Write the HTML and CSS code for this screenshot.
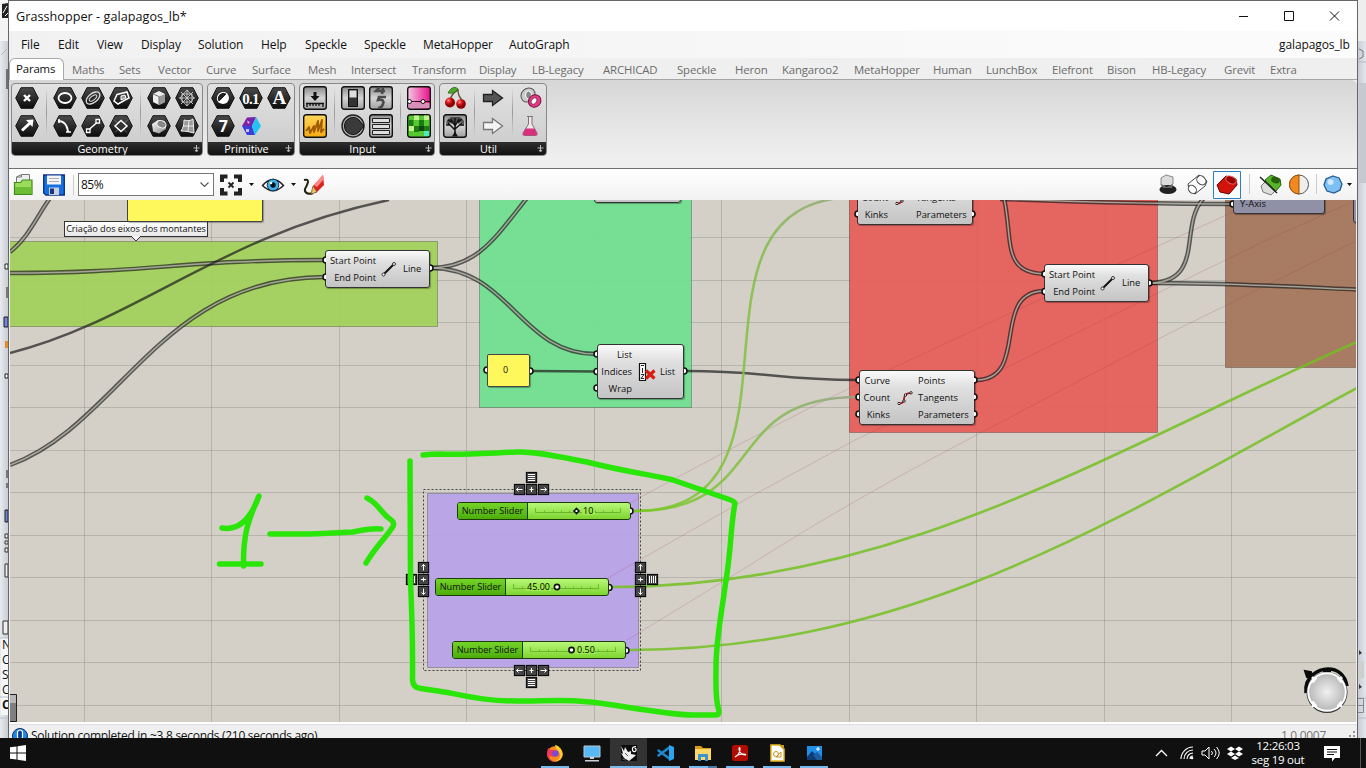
FILE: index.html
```html
<!DOCTYPE html>
<html lang="en">
<head>
<meta charset="utf-8">
<title>Grasshopper - galapagos_lb*</title>
<link rel="stylesheet" href="styles.css">
</head>
<body>
<svg class="defs" width="0" height="0">
  <defs>
    <linearGradient id="hexfill" x1="0" y1="0" x2="0" y2="1"><stop offset="0" stop-color="#4a4a4a"/><stop offset="1" stop-color="#0c0c0c"/></linearGradient>
    <linearGradient id="tile" x1="0" y1="0" x2="0" y2="1"><stop offset="0" stop-color="#8a8a8a"/><stop offset=".5" stop-color="#d4d4d4"/><stop offset="1" stop-color="#a0a0a0"/></linearGradient>
    <linearGradient id="solid" x1="0" y1="0" x2="1" y2="1"><stop offset="0" stop-color="#ffffff"/><stop offset="1" stop-color="#888"/></linearGradient>
    <linearGradient id="pink" x1="0" y1="0" x2="1" y2="0"><stop offset="0" stop-color="#f5c9e4"/><stop offset="1" stop-color="#e8108c"/></linearGradient>
    <linearGradient id="orange" x1="0" y1="0" x2="0" y2="1"><stop offset="0" stop-color="#ffd65c"/><stop offset="1" stop-color="#f7ab10"/></linearGradient>
    <radialGradient id="cherry" cx=".35" cy=".3"><stop offset="0" stop-color="#ff8888"/><stop offset=".5" stop-color="#d81818"/><stop offset="1" stop-color="#8c0000"/></radialGradient>
    <symbol id="hex" viewBox="0 0 24 22"><path d="M6 .7h12l5.300 10.300L18 21.300H6L.7 11z" fill="url(#hexfill)" stroke="#151515" stroke-width="1"/></symbol>
  </defs>
</svg>

<div class="desktop">
  <div class="behind-left">
    <svg width="8" height="738" viewBox="0 0 8 738">
      <path d="M0 0h8v41H0z" fill="#f4f4f4"/><path d="M2 4l6-1v15H2z" fill="#222"/><path d="M3 13l4-7M5 16l3-3" stroke="#fff"/>
      <path d="M1 55l6-6" stroke="#bbb"/><path d="M7 69v20" stroke="#111"/>
      <path d="M5 264h3v5H5zM5 374h3v4H5zM7 287v11M7 470v8M7 483v5" stroke="#222" fill="#fff"/>
      <path d="M4 317h4v10H4zM5 510h3v12H5z" fill="#7384d8" stroke="#222"/><path d="M5 341h3v7H5z" fill="#e38a2c"/>
      <path d="M5 534h3v4H5zM5 541h3v3H5zM5 548h3v4H5zM5 564h3v13H5zM3 621h5v13H3z" stroke="#333" fill="#eee"/>
      <path d="M1 638h7v77H1z" fill="#f5f6f8"/><path d="M0 638h8M0 697h8M0 718h8" stroke="#b8c2cf"/>
    </svg>
    <div class="sliver"><span>N</span><span>C</span><span>S</span><span>C</span><b>C</b></div>
  </div>

  <div class="window">
    <header class="titlebar">
      <span class="title">Grasshopper - galapagos_lb*</span>
      <svg class="winbtns" width="100" height="14" viewBox="0 0 100 14" fill="none" stroke="#111"><path d="M0 7.500h9M45.500 2.500h9v9h-9zM91 2.500l9 9M100 2.500l-9 9"/></svg>
    </header>
    <nav class="menu">
      <span>File</span><span>Edit</span><span>View</span><span>Display</span><span>Solution</span><span>Help</span><span>Speckle</span><span>Speckle</span><span>MetaHopper</span><span>AutoGraph</span><span class="doc">galapagos_lb</span>
    </nav>
    <nav class="tabs">
      <span class="active">Params</span><span>Maths</span><span>Sets</span><span>Vector</span><span>Curve</span><span>Surface</span><span>Mesh</span><span>Intersect</span><span>Transform</span><span>Display</span><span>LB-Legacy</span><span>ARCHICAD</span><span>Speckle</span><span>Heron</span><span>Kangaroo2</span><span>MetaHopper</span><span>Human</span><span>LunchBox</span><span>Elefront</span><span>Bison</span><span>HB-Legacy</span><span>Grevit</span><span>Extra</span>
    </nav>

    <section class="ribbon">
      <div class="panel">
        <div class="tools geometry">
          <svg class="ic" viewBox="0 0 24 22"><use href="#hex"/><path d="M9 8l6 6M15 8l-6 6" stroke="#fff" stroke-width="2.400"/></svg>
          <i class="rule"></i>
          <svg class="ic" viewBox="0 0 24 22"><use href="#hex"/><ellipse cx="12" cy="11" rx="6.500" ry="5" fill="none" stroke="#fff" stroke-width="1.800"/></svg>
          <svg class="ic" viewBox="0 0 24 22"><use href="#hex"/><g fill="none" stroke="#ddd" transform="rotate(-38 12 11)"><ellipse cx="12" cy="11" rx="8" ry="4.500" stroke-width="1.300"/><ellipse cx="12" cy="11" rx="4.500" ry="2"/></g></svg>
          <svg class="ic" viewBox="0 0 24 22"><use href="#hex"/><path d="M8 7.500L18 5l2 6-11 6-4-3z" fill="none" stroke="#fff" stroke-width="1.500"/><path d="M12 9l4-1 1 3-5 2z" fill="#999" stroke="#fff"/></svg>
          <i class="rule"></i>
          <svg class="ic" viewBox="0 0 24 22"><use href="#hex"/><path d="M6 7l6-3 6 3v8l-6 3-6-3z" fill="#eee"/><path d="M12 9.500l6-2.500v8l-6 3z" fill="#999"/><path d="M6 7l6 2.500V18" fill="none" stroke="#777"/></svg>
          <svg class="ic" viewBox="0 0 24 22"><use href="#hex"/><path d="M12 3v16M4 11h16M6 5l12 12M18 5L6 17M7 7h10v8H7zM5 11l7-8 7 8-7 8z" fill="none" stroke="#ccc" stroke-width=".9"/></svg>
          <svg class="ic" viewBox="0 0 24 22"><use href="#hex"/><path d="M7 15.500L15 8" stroke="#fff" stroke-width="3"/><path d="M11 5l7.500-.5L17.500 12z" fill="#fff"/></svg>
          <svg class="ic" viewBox="0 0 24 22"><use href="#hex"/><path d="M5 6c6 0 9 3 10 11" fill="none" stroke="#fff" stroke-width="2"/><path d="M13 17h5M6 4v4" stroke="#fff" stroke-width="1.600"/></svg>
          <svg class="ic" viewBox="0 0 24 22"><use href="#hex"/><path d="M7 15.500l10-9" stroke="#fff" stroke-width="1.500"/><path d="M5.500 14h3.500v3.500H5.500zM15 4.500h3.500V8H15z" fill="#222" stroke="#fff" stroke-width="1.300"/></svg>
          <svg class="ic" viewBox="0 0 24 22"><use href="#hex"/><path d="M5 4.500l13 13M19 4.500l-13 13" stroke="#777" stroke-width=".8"/><path d="M12 5.500l6 5.500-6 5.500L6 11z" fill="#333" stroke="#fff" stroke-width="1.500"/></svg>
          <svg class="ic" viewBox="0 0 24 22"><use href="#hex"/><path d="M5 9l6-4 8 4v5l-7 4.500-6-2z" fill="url(#solid)"/><ellipse cx="14.500" cy="9" rx="4.800" ry="3.500" fill="#888" stroke="#fff" transform="rotate(25 14 9)"/></svg>
          <svg class="ic" viewBox="0 0 24 22"><use href="#hex"/><path d="M9 5c4 1 6 1 9-1l1 14c-4-1-8-2-13-2 2-3 3-6 3-11z" fill="#999" stroke="#eee"/><path d="M14 6l-1 10M8 11l11 0" stroke="#eee" fill="none"/></svg>
        </div>
        <footer><span>Geometry</span><svg width="7" height="7" viewBox="0 0 7 7"><path d="M3.500 0v6M.5 3h6M2 5l1.500 2L5 5" stroke="#bbb" fill="none"/></svg></footer>
      </div>

      <div class="panel">
        <div class="tools primitive">
          <svg class="ic" viewBox="0 0 24 22"><use href="#hex"/><circle cx="12" cy="11" r="6" fill="#fff"/><path d="M7.800 15.200A6 6 0 0 1 16.200 6.800z" fill="#222" stroke="#fff" stroke-width="1"/></svg>
          <svg class="ic" viewBox="0 0 24 22"><use href="#hex"/><text x="11.500" y="16.500" class="hx">0.1</text></svg>
          <svg class="ic" viewBox="0 0 24 22"><use href="#hex"/><text x="12" y="17" class="hx big">A</text></svg>
          <svg class="ic" viewBox="0 0 24 22"><use href="#hex"/><text x="12" y="16.500" class="hx seven">7</text></svg>
          <svg class="ic" viewBox="0 0 24 22"><path d="M3 11L8 2.500l9-.5-4 9z" fill="#7a22a8"/><path d="M3 11h10l3 9H8z" fill="#3a3fd8"/><path d="M13 11l4-9 5 9-6 9z" fill="#22c4f4"/><path d="M8 5.500l3 1.500-2 2zM7 14h3v3H7z" fill="#fff" opacity=".7"/></svg>
        </div>
        <footer><span>Primitive</span><svg width="7" height="7" viewBox="0 0 7 7"><path d="M3.500 0v6M.5 3h6M2 5l1.500 2L5 5" stroke="#bbb" fill="none"/></svg></footer>
      </div>

      <div class="panel">
        <div class="tools input">
          <svg class="ic" viewBox="0 0 24 24"><rect x=".7" y=".7" width="22.600" height="22.600" rx="2.500" fill="url(#tile)" stroke="#111" stroke-width="1.400"/><path d="M12 6v5" stroke="#111" stroke-width="3"/><path d="M7.500 10h9L12 15z" fill="#111"/><path d="M3 17.500h18M4 17v4M7 17v3M10 17v3M13 17v3M16 17v3M20 17v4" stroke="#111" stroke-width="1.300"/></svg>
          <i class="rule"></i>
          <svg class="ic" viewBox="0 0 24 24"><rect x=".7" y=".7" width="22.600" height="22.600" rx="2.500" fill="url(#tile)" stroke="#111" stroke-width="1.400"/><path d="M7.500 3.500h9v17h-9z" fill="#333" stroke="#111"/><path d="M8.500 4.500h7v7h-7z" fill="#ddd"/></svg>
          <svg class="ic" viewBox="0 0 24 24"><rect x=".7" y=".7" width="22.600" height="22.600" rx="2.500" fill="url(#tile)" stroke="#111" stroke-width="1.400"/><path d="M11 1L7 5h9M14 1l-1 7M17 11h-7l-1 3c5-1 6 1 5 4-1 3-2 4-5 4" fill="none" stroke="#4a4a4a" stroke-width="2.600"/></svg>
          <i class="rule"></i>
          <svg class="ic" viewBox="0 0 24 24"><rect x=".7" y=".7" width="22.600" height="22.600" rx="2.500" fill="url(#pink)" stroke="#111" stroke-width="1.400"/><path d="M1.500 17h21v5h-21z" fill="#d890b8"/><path d="M1 15.500h22" stroke="#311" stroke-width="1.200"/><circle cx="2.500" cy="15.500" r="2" fill="#fff" stroke="#111"/><circle cx="16" cy="15.500" r="2" fill="#fff" stroke="#111"/></svg>
          <svg class="ic" viewBox="0 0 24 24"><rect x=".7" y=".7" width="22.600" height="22.600" rx="2.500" fill="url(#orange)" stroke="#111" stroke-width="1.400"/><path d="M3 17l3-4 1 6 4-7v6l4-11v10l4-11-1 12 3-3" fill="none" stroke="#a05c00" stroke-width="1.900" stroke-linejoin="round"/></svg>
          <svg class="ic" viewBox="0 0 24 24"><circle cx="12" cy="12" r="11" fill="#aaa" stroke="#222" stroke-width="1.400"/><path d="M3.500 12a8.500 8.500 0 0 1 14.500-6l5 6-5 6a8.500 8.500 0 0 1-14.500-6z" fill="#3a3a3a" stroke="#111"/></svg>
          <svg class="ic" viewBox="0 0 24 24"><rect x=".7" y=".7" width="22.600" height="22.600" rx="2.500" fill="url(#tile)" stroke="#111" stroke-width="1.400"/><path d="M3.500 4.500h17v4h-17zM3.500 10.500h17v4h-17zM3.500 16.500h17v4h-17z" fill="#ddd" stroke="#222"/></svg>
          <svg class="ic" viewBox="0 0 24 24"><rect x=".7" y=".7" width="22.600" height="22.600" rx="2.500" fill="#55c832" stroke="#111" stroke-width="1.400"/><path d="M1.500 6h5v6h-5zM12 6h5v6h-5zM7 12h5v6H7zM17 12h5v5h-5z" fill="#1c7c14"/><path d="M7 1.500h5V6H7zM17 1.500h5V6h-5zM2 12h5v5H2z" fill="#c6f090"/><path d="M12 12h5v5h-5z" fill="#0c4c10"/><path d="M17 17h5v5h-5z" fill="#50e8c0"/></svg>
        </div>
        <footer><span>Input</span><svg width="7" height="7" viewBox="0 0 7 7"><path d="M3.500 0v6M.5 3h6M2 5l1.500 2L5 5" stroke="#bbb" fill="none"/></svg></footer>
      </div>

      <div class="panel">
        <div class="tools util">
          <svg class="ic" viewBox="0 0 24 24"><path d="M7 15c1-6 4-9 8-11 0 5 2 8 4 10" fill="none" stroke="#653" stroke-width="1.400"/><path d="M15 3C11-1 7 3 5 7c5 1 8-1 10-4z" fill="#4da82a" stroke="#276012" stroke-width=".7"/><circle cx="7" cy="16.500" r="5" fill="url(#cherry)"/><circle cx="18" cy="18" r="4.800" fill="url(#cherry)"/></svg>
          <i class="rule"></i>
          <svg class="ic" viewBox="0 0 24 24"><path d="M2.500 8.500h9V4.500l10 7.500-10 7.500v-4h-9z" fill="#555" stroke="#222" stroke-width="1.300"/></svg>
          <i class="rule"></i>
          <svg class="ic" viewBox="0 0 24 24"><ellipse cx="9" cy="9" rx="7.500" ry="6.500" fill="#ccc" stroke="#555" transform="rotate(-45 9 9)"/><ellipse cx="9.500" cy="9" rx="3" ry="4" fill="#888" stroke="#fff"/><ellipse cx="15.500" cy="15.500" rx="6.500" ry="6" fill="#e03c84" stroke="#7a1040" transform="rotate(-45 15 15)"/><ellipse cx="15" cy="15" rx="2.500" ry="3.500" fill="#fff" stroke="#a03060" transform="rotate(35 15 15)"/></svg>
          <svg class="ic" viewBox="0 0 24 24"><rect x=".7" y=".7" width="22.600" height="22.600" rx="2.500" fill="url(#tile)" stroke="#111" stroke-width="1.400"/><path d="M12 22V11M12 16L5 9M12 15l7-6M12 12L8 5M12 12l4-7M12 13V4M7 11H3M17 11h4M9 8L5 6M15 8l4-3" stroke="#111" stroke-width="1.500"/><path d="M3 10l1-4 4-3 4 0 5 0 4 4 0 4-3-3-2 2-3-2-3 2-3-1z" fill="#111" opacity=".6"/><path d="M9 22.500l3-5 3 5z" fill="#111"/></svg>
          <svg class="ic" viewBox="0 0 24 24"><path d="M2.500 8.500h9V4.500l10 7.500-10 7.500v-4h-9z" fill="#f4f4f4" stroke="#777" stroke-width="1.300"/></svg>
          <svg class="ic" viewBox="0 0 24 24"><path d="M8 2.500h6M9.500 2.500V10L4 19q-1 2.500 2 2.500h10q3 0 2-2.500L13 10V2.500" fill="#f4e4ec" stroke="#777"/><path d="M6.500 14.500h9l2.500 5q.5 2-2 2H6q-2.500 0-2-2z" fill="#d8307c"/></svg>
        </div>
        <footer><span>Util</span><svg width="7" height="7" viewBox="0 0 7 7"><path d="M3.500 0v6M.5 3h6M2 5l1.500 2L5 5" stroke="#bbb" fill="none"/></svg></footer>
      </div>
    </section>

    <section class="toolbar">
      <svg width="22" height="24" viewBox="0 0 22 24"><path d="M3.500 11V4l5-2.500h8V12" fill="#eee" stroke="#777"/><path d="M8.500 1.500V4h-5" fill="none" stroke="#777"/><path d="M1.500 21.500v-12h6l2-2.500h9.500v14.500z" fill="#9cdc5c" stroke="#3d8a1a" stroke-width="1.200"/><path d="M2 14h16.500v7H2z" fill="#6cbc34"/></svg>
      <svg class="save" width="22" height="24" viewBox="0 0 22 24"><path d="M.7 2h20.600v20H3L.7 20z" fill="#1670e0" stroke="#0a2f80" stroke-width="1.300"/><path d="M4 2.500h14v9H4z" fill="#f4f4f4"/><path d="M6 5.500h10M6 8.500h10" stroke="#aab"/><path d="M6 14.500h10v7.500H6z" fill="#c8d0e0"/><path d="M7 15.500h4v5.500H7z" fill="#1a3580"/></svg>
      <i class="bar"></i>
      <div class="zoom"><span>85%</span><svg width="9" height="6" viewBox="0 0 9 6"><path d="M.5 .5l4 4 4-4" fill="none" stroke="#555" stroke-width="1.100"/></svg></div>
      <svg class="frame" width="24" height="22" viewBox="0 0 24 22"><path d="M3 8V2.500h5.500M15 2.500h6V8M21 14v5.500h-6M8.500 19.500H3V14" fill="none" stroke="#222" stroke-width="4"/><path d="M9.500 8.500l5 5M14.500 8.500l-5 5" stroke="#222" stroke-width="1.800"/></svg>
      <b class="drop"></b>
      <svg class="eye" width="24" height="20" viewBox="0 0 24 20"><path d="M1.500 10.500Q12-1.500 22.500 10.500 12 21 1.500 10.500z" fill="#fff" stroke="#222" stroke-width="1.500"/><circle cx="12" cy="10" r="5.800" fill="#48b0e8" stroke="#123a60"/><circle cx="12" cy="10" r="2.700" fill="#061018"/><circle cx="10" cy="8" r="1.300" fill="#fff"/></svg>
      <b class="drop"></b>
      <svg class="pencil" width="24" height="24" viewBox="0 0 24 24"><path d="M1 7c7-2 3 5 1 9-1 4 4 6 8 4" fill="none" stroke="#221" stroke-width="2"/><path d="M10 13L20 2l1 10-8 8z" fill="#d8241c"/><path d="M11 12l3 2 7-8-1-4z" fill="#f88"/><path d="M8 21l2-8 4 6z" fill="#f2c060" stroke="#753" stroke-width=".8"/></svg>
      <span class="fill"></span>
      <svg class="view" width="172" height="26" viewBox="0 0 172 26">
        <path d="M3 6l5-3 7 2v7l-6 4-6-3z" fill="#ddd" stroke="#888"/><ellipse cx="10" cy="17.500" rx="8.500" ry="4.500" fill="#222"/><path d="M3 12l6 3 6-3-1 4H5z" fill="#666"/>
        <g fill="#fff" stroke="#444"><path d="M30 12L41 3l8 6-2 5-10 8-6-4z"/><ellipse cx="43.500" cy="8" rx="5" ry="4" transform="rotate(45 43 8)"/><ellipse cx="34.500" cy="17" rx="4.500" ry="3.500" transform="rotate(45 34 17)"/></g>
        <path d="M55.500 -.5h27v27h-27z" fill="#f8fbff" stroke="#2a7fc4"/><path d="M59 13L68 4l10 3 1 6-8 9-9-2z" fill="#d0140c" stroke="#6a0000"/><ellipse cx="73" cy="8" rx="5.500" ry="3.500" fill="#900" stroke="#e66" transform="rotate(25 73 8)"/>
        <path d="M91.500 2v20M158.500 2v20" stroke="#ccc"/>
        <path d="M103 14L113 4l9 4v6l-9 9-8-3z" fill="#ddd" stroke="#777"/><path d="M107 8l6-5 9 4 1 6-5 6z" fill="#58b428" stroke="#2a6812"/><ellipse cx="117.500" cy="8" rx="4.500" ry="3" fill="#286010" transform="rotate(20 117 8)"/><path d="M102 5l17 16" stroke="#222" stroke-width="1.500"/>
        <circle cx="141" cy="12.500" r="9.500" fill="#eee" stroke="#555"/><path d="M141 3a9.500 9.500 0 0 0 0 19z" fill="#f08a20" stroke="#a05000"/>
      </svg>
      <svg class="ball" width="20" height="20" viewBox="0 0 20 20"><path d="M10 1l6 2 3 6-2 6-6 3-7-2-3-6 2-6z" fill="#7cc0f4" stroke="#235a94" stroke-width="1.300"/><circle cx="7.500" cy="7" r="3" fill="#cfe8fc"/></svg>
      <b class="drop"></b>
    </section>

    <main class="canvas">
      <div class="world">
        <svg class="layer" width="1366" height="768" viewBox="0 0 1366 768">
          <defs>
            <linearGradient id="w1" gradientUnits="userSpaceOnUse" x1="640" y1="0" x2="860" y2="0"><stop offset="0" stop-color="#78c824"/><stop offset=".5" stop-color="#82c044"/><stop offset="1" stop-color="#96a088"/></linearGradient>
          </defs>
          <g stroke="#1e321e" stroke-opacity=".17">
            <path d="M84.500 200v522M211.500 200v522M339.500 200v522M466.500 200v522M594.500 200v522M721.500 200v522M849.500 200v522M976.500 200v522M1104.500 200v522M1231.500 200v522"/>
            <path d="M10 237.500h1347M10 280.500h1347M10 322.500h1347M10 365.500h1347M10 407.500h1347M10 450.500h1347M10 492.500h1347M10 535.500h1347M10 577.500h1347M10 620.500h1347M10 662.500h1347M10 705.500h1347"/>
          </g>
          <g stroke="#000" stroke-opacity=".25" fill-opacity=".93">
            <path d="M9.500 241.500h428v85H9.500z" fill="#a1d15a"/>
            <path d="M479.500 190.500h212v217h-212z" fill="#70e090"/>
            <path d="M849.500 190.500h308v242h-308z" fill="#e65d58"/>
            <path d="M1225.500 190.500h140v177h-140z" fill="#a5755a"/>
            <path d="M427.500 493.500h211v174h-211z" fill="#b8a1e9"/>
          </g>
          <g fill="none" stroke="#a03050" stroke-opacity=".2">
            <path d="M630 503C690 470 800 412 850 388L1017 310 1233 212 1260 200"/>
            <path d="M608 578L750 497 855 440 977 382 1170 287 1263 242 1356 200"/>
            <path d="M627 640L750 565C820 520 900 475 967 440L1170 333 1356 241"/>
          </g>
          <g class="double">
            <g id="dbl"><path d="M10 252C28 238 36 218 50 198"/><path d="M10 273C150 273 180 260 325 260"/><path d="M10 465C120 425 160 277 325 277"/><path d="M431 268C478 267 495 238 527 198"/><path d="M431 268C510 268 520 354 596 354"/><path d="M1004 198C1013 240 1002 273 1044 274"/><path d="M977 380C1030 379 990 292 1044 291"/><path d="M1000 199C1080 202 1150 204 1233 204"/><path d="M1151 283C1206 281 1178 225 1204 198"/><path d="M1151 283C1230 283 1300 287 1357 289.500"/></g>
          </g>
          <use href="#dbl" class="core"/>
          <g class="single"><path d="M10 353C140 320 220 235 389 200"/><path d="M532 371L596 371.500"/><path d="M686 371C770 371 775 380 858 380"/></g>
          <g fill="none" stroke-width="2.600" stroke-opacity=".85">
            <path d="M634 511C830 511 660 197 857 197" stroke="url(#w1)"/>
            <path d="M634 511C770 511 720 397 858 397" stroke="url(#w1)"/>
            <path d="M612 587C900 587 1110 450 1357 342" stroke="#74c022"/>
            <path d="M630 650C920 650 1130 510 1357 388" stroke="#74c022"/>
          </g>
        </svg>

        <div class="caption">Criação dos eixos dos montantes</div>
        <div class="note big-note"></div>
        <svg class="tip" width="10" height="7" viewBox="0 0 10 7"><path d="M0 1l5 5 5-5" fill="#f4f4f4" stroke="#333"/></svg>

        <div class="node line-a">
          <ul class="in"><li>Start Point</li><li>End Point</li></ul>
          <svg width="16" height="16" viewBox="0 0 16 16"><path d="M2.500 13.500l10-10" stroke="#111" stroke-width="2"/><circle cx="2.500" cy="13.500" r="1.500" fill="#fff" stroke="#333"/><circle cx="13" cy="3" r="1.500" fill="#fff" stroke="#333"/></svg>
          <ul class="out"><li>Line</li></ul>
        </div>
        <div class="node line-b">
          <ul class="in"><li>Start Point</li><li>End Point</li></ul>
          <svg width="16" height="16" viewBox="0 0 16 16"><path d="M2.500 13.500l10-10" stroke="#111" stroke-width="2"/><circle cx="2.500" cy="13.500" r="1.500" fill="#fff" stroke="#333"/><circle cx="13" cy="3" r="1.500" fill="#fff" stroke="#333"/></svg>
          <ul class="out"><li>Line</li></ul>
        </div>
        <div class="node cut"></div>
        <div class="node list">
          <ul class="in"><li>List</li><li>Indices</li><li>Wrap</li></ul>
          <svg width="18" height="20" viewBox="0 0 18 20"><path d="M1.500 1.500h6v17h-6z" fill="#fff" stroke="#111" stroke-width="1.200"/><path d="M3 3.500h3M4.500 6v5M3 12.500h3l-3 4h3" stroke="#222" fill="none"/><path d="M8 8.500l8.500 8M16.500 8.500l-8.500 8" stroke="#d81c10" stroke-width="3.200"/></svg>
          <ul class="out"><li>List</li></ul>
        </div>
        <div class="node div-a">
          <ul class="in"><li>Curve</li><li>Count</li><li>Kinks</li></ul>
          <svg width="16" height="16" viewBox="0 0 16 16"><path d="M1.500 13.500C6 14 7 11 7 9s1-6 7-6" fill="none" stroke="#b01818" stroke-width="1.800"/><g fill="#fff" stroke="#222"><circle cx="2" cy="13.500" r="1.200"/><circle cx="7" cy="11" r="1.200"/><circle cx="8.500" cy="5" r="1.200"/><circle cx="14" cy="2.800" r="1.200"/></g></svg>
          <ul class="out"><li>Points</li><li>Tangents</li><li>Parameters</li></ul>
        </div>
        <div class="node div-b">
          <ul class="in"><li>Curve</li><li>Count</li><li>Kinks</li></ul>
          <svg width="16" height="16" viewBox="0 0 16 16"><path d="M1.500 13.500C6 14 7 11 7 9s1-6 7-6" fill="none" stroke="#b01818" stroke-width="1.800"/><g fill="#fff" stroke="#222"><circle cx="2" cy="13.500" r="1.200"/><circle cx="7" cy="11" r="1.200"/></g></svg>
          <ul class="out"><li>Points</li><li>Tangents</li><li>Parameters</li></ul>
        </div>
        <div class="node axis"><span>Y-Axis</span></div>
        <div class="node edge"></div>
        <div class="note zero">0</div>

        <div class="slider s1"><span>Number Slider</span><svg width="102" height="16" viewBox="0 0 102 16"><path d="M7.500 5v4.500h85V5M16.500 9.500v-2M25.500 9.500v-2M33.500 9.500v-2M41.500 9.500v-2M67.500 9.500v-2M75.500 9.500v-2M84.500 9.500v-2" class="ticks"/><path d="M54 5h13v7H54z" fill="#9cec50"/><path d="M48.500 5.500l2.500 2.500-2.500 2.500L46 8z" class="knob"/><text x="55" y="11.200">10</text></svg></div>
        <div class="slider s2"><span>Number Slider</span><svg width="102" height="16" viewBox="0 0 102 16"><path d="M7.500 5v4.500h85V5M16.500 9.500v-2M59.500 9.500v-2M67.500 9.500v-2M75.500 9.500v-2M84.500 9.500v-2" class="ticks"/><path d="M20 5h25v7H20z" fill="#9cec50"/><circle cx="51" cy="8" r="2.600" class="knob"/><text x="21" y="11.200">45.00</text></svg></div>
        <div class="slider s3"><span>Number Slider</span><svg width="102" height="16" viewBox="0 0 102 16"><path d="M7.500 5v4.500h85V5M16.500 9.500v-2M25.500 9.500v-2M33.500 9.500v-2M75.500 9.500v-2M84.500 9.500v-2" class="ticks"/><path d="M52 5h20v7H52z" fill="#9cec50"/><circle cx="48.500" cy="8" r="2.600" class="knob"/><text x="54" y="11.200">0.50</text></svg></div>

        <svg class="layer" width="1366" height="768" viewBox="0 0 1366 768">
          <defs>
            <radialGradient id="dial"><stop offset="0" stop-color="#f0f0f0"/><stop offset="1" stop-color="#b8b8b8"/></radialGradient>
            <symbol id="btn" viewBox="0 0 12 12"><path d="M.8 .8h10.400v10.400H.8z" fill="#444" stroke="#0a0a0a" stroke-width="1.200"/></symbol>
          </defs>
          <g fill="#fff" stroke="#111" stroke-width="1.600">
            <path d="M326 257a3 3 0 0 0 0 6M326 274a3 3 0 0 0 0 6M430 265a3 3 0 0 1 0 6M487 367a3 3 0 0 0 0 6M530 368a3 3 0 0 1 0 6M597 351a3 3 0 0 0 0 6M597 368.500a3 3 0 0 0 0 6M597 385a3 3 0 0 0 0 6M684 368a3 3 0 0 1 0 6M859 377a3 3 0 0 0 0 6M859 394a3 3 0 0 0 0 6M859 411a3 3 0 0 0 0 6M974 377a3 3 0 0 1 0 6M974 394a3 3 0 0 1 0 6M974 411a3 3 0 0 1 0 6M858 211a3 3 0 0 0 0 6M972 211a3 3 0 0 1 0 6M1045 271a3 3 0 0 0 0 6M1045 288.500a3 3 0 0 0 0 6M1149 280a3 3 0 0 1 0 6M1233 201a3 3 0 0 0 0 6M630 508a3 3 0 0 1 0 6M609 584.500a3 3 0 0 1 0 6M626 647.500a3 3 0 0 1 0 6"/>
          </g>
          <path d="M423.500 489.500h217v181h-217z" fill="none" stroke="#444" stroke-dasharray="2 2"/>
          <g>
            <use href="#btn" x="525.500" y="471.500" width="12" height="12"/><use href="#btn" x="513.500" y="483.500" width="12" height="12"/><use href="#btn" x="525.500" y="483.500" width="12" height="12"/><use href="#btn" x="537.500" y="483.500" width="12" height="12"/>
            <use href="#btn" x="513.500" y="664.500" width="12" height="12"/><use href="#btn" x="525.500" y="664.500" width="12" height="12"/><use href="#btn" x="537.500" y="664.500" width="12" height="12"/><use href="#btn" x="525.500" y="676.500" width="12" height="12"/>
            <use href="#btn" x="417.500" y="561.500" width="12" height="12"/><use href="#btn" x="417.500" y="573.500" width="12" height="12"/><use href="#btn" x="417.500" y="585.500" width="12" height="12"/><use href="#btn" x="405.500" y="573.500" width="12" height="12"/>
            <use href="#btn" x="634.500" y="561.500" width="12" height="12"/><use href="#btn" x="634.500" y="573.500" width="12" height="12"/><use href="#btn" x="634.500" y="585.500" width="12" height="12"/><use href="#btn" x="646.500" y="573.500" width="12" height="12"/>
          </g>
          <g fill="none" stroke="#fff" stroke-width="1">
            <path d="M528 474.500h7M528 476.500h7M528 478.500h7M528 480.500h7M528 679.500h7M528 681.500h7M528 683.500h7M528 685.500h7"/>
            <path d="M649.500 576v7M651.500 576v7M653.500 576v7M655.500 576v7M408.500 576v7M410.500 576v7M412.500 576v7M414.500 576v7"/>
            <path d="M522.500 489.500h-6M518.500 487.500l-2 2 2 2M540.500 489.500h6M544.500 487.500l2 2-2 2M531.500 487v5M529.500 489.500h4M522.500 670.500h-6M518.500 668.500l-2 2 2 2M540.500 670.500h6M544.500 668.500l2 2-2 2M531.500 668v5M529.500 670.500h4"/>
            <path d="M423.500 570.500v-6M421.500 566.500l2-2 2 2M423.500 588.500v6M421.500 592.500l2 2 2-2M421 579.500h5M423.500 577.500v4M640.500 570.500v-6M638.500 566.500l2-2 2 2M640.500 588.500v6M638.500 592.500l2 2 2-2M638 579.500h5M640.500 577.500v4"/>
          </g>
          <path d="M1306 693c-2-17 13-24 22-24 9 0 17 5 19 17" fill="none" stroke="#0a0a0a" stroke-width="3.500"/>
          <path d="M1305 671l6 1v5l-4 0zM1315 673l4-2M1323 671l3 0 5 0M1338 672l6 5" fill="#0a0a0a" stroke="#0a0a0a" stroke-width="2"/>
          <circle cx="1327" cy="692.500" r="20.500" fill="#333"/><circle cx="1327" cy="692" r="18.800" fill="url(#dial)" stroke="#fff" stroke-width="2"/>
          <path d="M1312 677l5 1-4 5zM1342 677l-5 1 4 5zM1312 707l5-1-4-5zM1342 707l-5-1 4-5z" fill="#fff" stroke="#fff"/>
          <path d="M9 694.500h7.500v27H9z" fill="#808080" stroke="#222"/><path d="M10 695h6v8h-6z" fill="#b8b8b8"/>
          <g class="ink">
            <path d="M410 461L410.500 580C412 615 413 640 412.500 680Q413 688 421 688.500L438 691C465 695 480 701 517 701 550 701 575 698 613 705 650 711 675 715 693 715H716Q720 715 718.500 709C715 698 716 680 716 667 716 640 722 610 725 587 732 545 730 530 735 503Q734 501 728 499L673 480C655 475 630 473 587 462 560 457 535 451 517 452 490 453 460 455 440 454Q430 454 423 455"/>
            <path d="M222 528Q246 532 259 496C248 520 243 535 243.500 566M219.500 564H261M270 534H310C335 533 345 532 353 532Q372 528 381 529M367 498C378 503 382 514 390 519Q396 523 392 528C386 537 374 549 366 563"/>
          </g>
        </svg>
      </div>
    </main>

    <footer class="status">
      <svg width="16" height="16" viewBox="0 0 16 16"><circle cx="8" cy="8" r="7.500" fill="#1c8ae0" stroke="#0b2a70"/><rect x="5.500" y="2" width="5" height="9" rx="2.500" fill="#0b3a98" stroke="#fff" stroke-width="1.200"/></svg>
      <span>Solution completed in ~3.8 seconds (210 seconds ago)</span>
      <em>1.0.0007</em>
      <svg width="10" height="10" viewBox="0 0 10 10"><path d="M6 3h2v2H6zM2 7h2v2H2zM6 7h2v2H6z" fill="#999"/></svg>
    </footer>
  </div>

  <div class="behind-right"><svg width="8" height="738" viewBox="0 0 8 738"><path d="M0 0h8v41H0z" fill="#eee"/><path d="M0 62h8M0 718h8M0 698h8" stroke="#b4bac6"/><path d="M1 49l4 2v6l-4 2" fill="none" stroke="#777"/><path d="M1 83h7v100H1z" fill="#c6c9cf"/><path d="M0 661h6v17H0z" fill="#cfcfcf"/><path d="M1 650l3 3-3 2zM1 684l3 3-3 2z" fill="#333"/><path d="M0 698.500h5.500v14H0M0 705.500h5" fill="none" stroke="#888"/></svg></div>
</div>

<div class="taskbar">
  <svg class="start" width="16" height="16" viewBox="0 0 16 16"><path d="M0 2.300L6.500 1.400V7.500H0zM7.500 1.200L16 0v7.500H7.500zM0 8.500h6.500v6.100L0 13.700zM7.500 8.500H16V16l-8.500-1.200z" fill="#fff"/></svg>
  <div class="apps">
    <div class="app run"><svg width="18" height="18" viewBox="0 0 18 18"><circle cx="9" cy="10" r="7.800" fill="#ff8a1c"/><path d="M9 1c3 0 7 4 7.500 9a7.500 7.500 0 0 1-10 7c6 1 9-4 7-8-1-3-4-4-4.500-8z" fill="#ffd030"/><path d="M2 4l3 2 4 0-2 3 3 2a4.500 4.500 0 0 1-7 0 8 8 0 0 0 7 7C4 18 0 13 1.200 9z" fill="#f03858"/><circle cx="9.500" cy="9.500" r="3.200" fill="#7a4ad8"/></svg></div>
    <div class="app"><svg width="18" height="18" viewBox="0 0 18 18"><path d="M1 2h16v11H1z" fill="#58b8f4" stroke="#b8c8d8"/><path d="M7 13h4v2H7zM2 16h14v1.500H2z" fill="#c8d0d8"/></svg></div>
    <div class="app run on"><svg width="18" height="18" viewBox="0 0 18 18"><path d="M1 1h16v16H1z" fill="#0c0c0c"/><path d="M1 2l3 5 1-4 3 5 3-1 0 3 5 1-2 2-5 4-5-3-3-5 2 1z" fill="#eee"/><path d="M2 15l4 1M5 9l3 3" stroke="#555"/><path d="M16 2.500q-4 0-3.500 3a1.800 1.800 0 1 0 2-1.500" fill="none" stroke="#fff" stroke-width="1.200"/></svg></div>
    <div class="app run"><svg width="18" height="18" viewBox="0 0 18 18"><path d="M1.500 6.500L13 15M1.500 11.500L13 3" stroke="#1c88d0" stroke-width="2.500" stroke-linecap="round"/><path d="M12 1l5 2v12l-5 2z" fill="#2aa6f0"/></svg></div>
    <div class="app run multi"><svg width="18" height="18" viewBox="0 0 18 18"><path d="M1 2h6l2 2h8v3H1z" fill="#d89c18"/><path d="M1 5h16v11H1z" fill="#ffd868"/><path d="M4 17V10h10v7h-3v-4H7v4z" fill="#3a94d4"/></svg></div>
    <div class="app run"><svg width="18" height="18" viewBox="0 0 18 18"><rect x="1" y="1" width="16" height="16" rx="2.500" fill="#b30b00"/><path d="M4 13c3-1 5-5 5-8 0-2-1-1.500-1 0 0 3 3 6 6 6 1 0 1-1-1-1-3 0-7 1-9 3z" fill="none" stroke="#fff" stroke-width="1.200"/></svg></div>
    <div class="app run"><svg width="18" height="18" viewBox="0 0 18 18"><path d="M3 1h9l4 4v12H3z" fill="#fff" stroke="#e8b820" stroke-width="1.500"/><path d="M11 1h5v5z" fill="#c89818"/><circle cx="8" cy="10" r="2.500" fill="none" stroke="#c89020"/><path d="M8 13l5-5v5z" fill="none" stroke="#c89020"/></svg></div>
    <div class="app run"><svg width="18" height="18" viewBox="0 0 18 18"><path d="M2 2h15v14H2z" fill="#1f8fe8"/><path d="M2 13l5-6 9 9H2z" fill="#0e3c74"/><path d="M8 11l4-3 5 5v3h-5z" fill="#1c5ca0"/><path d="M13 3v4M11 5h4" stroke="#fff"/></svg></div>
  </div>
  <svg class="tray" width="90" height="20" viewBox="0 0 90 20" fill="none" stroke="#fff"><path d="M1 13l5.500-5.500L12 13" stroke-width="1.300"/><path d="M26 16a12 12 0 0 1 12-12M29 16a9 9 0 0 1 9-9M32 16a6 6 0 0 1 6-6M35 16a3 3 0 0 1 3-3" stroke-width="1.100"/><circle cx="37" cy="15" r="1.300" fill="#fff" stroke="none"/><path d="M47 8h3l4-4v12l-4-4h-3zM56.500 8q2 2 0 4M59 6q4 4 0 8M61.500 4q5.500 6 0 12"/><path d="M72 6l4-2.500L80 6l-4 2.500zM80 6l4-2.500L88 6l-4 2.500zM72 11l4-2.500 4 2.500-4 2.500zM80 11l4-2.500 4 2.500-4 2.500zM76 15l4-2.500 4 2.500-4 2z" fill="#fff" stroke="none"/></svg>
  <div class="clock"><span>12:26:03</span><span>seg 19 out</span></div>
  <svg class="bubble" width="17" height="17" viewBox="0 0 17 17"><path d="M0 1h16v12h-5l-3 3.500V13H0z" fill="#fff"/><path d="M3 4.500h10M3 7h10M3 9.500h7" stroke="#111"/></svg>
  <i class="peek"></i>
</div>
</body>
</html>
```

FILE: styles.css
```css
* { box-sizing: border-box; }
body { margin: 0; width: 1366px; height: 768px; overflow: hidden; display: flex; flex-direction: column; background: #d8dbe3; font-family: "Open Sans", "Noto Sans", sans-serif; font-size: 12px; color: #111; }
svg { display: block; flex: none; overflow: visible; }
ul { list-style: none; margin: 0; padding: 0; }
.defs { position: absolute; }

.desktop { height: 738px; display: flex; overflow: hidden; }
.behind-left, .behind-right { width: 8px; overflow: hidden; position: relative; background: linear-gradient(90deg, #e8eaee, #c9ccd4); }
.behind-right { background: linear-gradient(90deg, #c9ccd6, #e4e6ec); }
.sliver { position: absolute; left: 2px; top: 637px; display: grid; font-size: 12px; line-height: 15px; }
.window { width: 1350px; height: 738px; display: flex; flex-direction: column; background: #efefef; border: solid #666; border-width: 1px 1px 0 1px; }

.titlebar { height: 30px; background: #fff; display: flex; justify-content: space-between; align-items: center; padding: 0 18px 0 7px; }
.title { font-size: 12.600px; letter-spacing: .05px; }

.menu { height: 27px; line-height: 28px; display: grid; padding-left: 12px; background: linear-gradient(90deg, #f1f1f1, #fcfcfc); font-size: 12px; letter-spacing: -.1px; white-space: nowrap;
  grid-template-columns: 37px 39px 44px 57px 63px 44px 59px 59px 86px 770px 1fr; }

.tabs { height: 22px; line-height: 24px; display: grid; font-size: 11.400px; letter-spacing: -.15px; color: #6c6c6c; white-space: nowrap; border-bottom: 1px solid #a5a5a5;
  grid-template-columns: 63px 47px 39px 48px 46px 56px 43px 61px 67px 53px 71px 74px 58px 47px 72px 79px 53px 66px 55px 45px 72px 46px 1fr; }
.tabs .active { height: 23px; width: 55px; line-height: 20px; color: #111; background: #fff; border: 1px solid #aaa; border-bottom: 0; border-radius: 6px 6px 0 0; padding-left: 6px; }

.ribbon { height: 88px; padding: 3px 0 0 2px; display: flex; gap: 4px; align-items: flex-start; background: linear-gradient(#d6d6d6, #efefef 77px); border-radius: 0 6px 0 0; }
.panel { height: 73px; border: 1px solid #888; border-radius: 4px; overflow: hidden; background: linear-gradient(#e2e2e2, #cacaca); display: flex; flex-direction: column; }
.tools { height: 58px; padding: 0 1px; display: grid; grid-template-rows: 28px 28px; justify-items: center; align-items: center; }
.geometry { grid-template-columns: 28px 10px 28px 28px 28px 10px 28px 28px; }
.primitive { grid-template-columns: 28px 28px 28px; }
.input { grid-template-columns: 28px 10px 28px 28px 10px 28px; }
.util { grid-template-columns: 28px 10px 28px 10px 28px; }
.rule { grid-row: 1 / span 2; width: 1px; height: 48px; background: linear-gradient(transparent, #999, transparent); }
.geometry .rule:nth-of-type(1), .input .rule:nth-of-type(1), .util .rule:nth-of-type(1) { grid-column: 2; }
.geometry .rule:nth-of-type(2) { grid-column: 6; }
.input .rule:nth-of-type(2) { grid-column: 5; }
.util .rule:nth-of-type(2) { grid-column: 4; }
.ic { width: 24px; height: 24px; }
.panel footer { flex: 1; background: linear-gradient(#2e2e2e, #111); color: #fff; font-size: 10.800px; line-height: 12px; display: flex; align-items: center; justify-content: center; padding: 0 2px 0 0; }
.panel footer span { flex: 1; text-align: center; margin-right: -18px; padding-right: 18px; }
.hx { fill: #fff; text-anchor: middle; font: bold 15px "Liberation Serif", serif; letter-spacing: -.8px; }
.hx.big { font-size: 19px; }
.hx.seven { font-family: "Open Sans", sans-serif; font-size: 16px; }

.toolbar { height: 32px; border-top: 1px solid #707070; background: linear-gradient(#fff, #f2f2f2); display: flex; align-items: center; padding-left: 4px; }
.save { margin-left: 8px; }
.bar { width: 1px; height: 20px; background: #ccc; margin: 0 4px 0 8px; }
.zoom { width: 136px; height: 23px; border: 1px solid #777; background: #fff; display: flex; justify-content: space-between; align-items: center; padding: 0 4px 0 2px; font-size: 12px; letter-spacing: -.5px; }
.frame { margin-left: 5px; }
.drop { width: 5px; height: 3px; background: #111; clip-path: polygon(0 0, 100% 0, 50% 100%); margin-left: 6px; }
.eye { margin-left: 7px; }
.pencil { margin-left: 7px; }
.fill { flex: 1; }
.ball { margin-left: -7px; }
.ball + .drop { margin: 0 5px 0 4px; }
.view { margin-top: 1px; }

.canvas { height: 522px; flex: none; margin-left: 1px; position: relative; overflow: hidden; background: #d4d0c8; border-right: 1px solid #eee; }
.world { position: absolute; left: -10px; top: -200px; width: 1366px; height: 768px; }
.layer { position: absolute; left: 0; top: 0; }
.double, .core, .single { fill: none; }
.double { stroke: #1c1c1c; stroke-opacity: .68; stroke-width: 4.400; }
.core { stroke: #b4b4a8; stroke-opacity: .85; stroke-width: 1.500; }
.single { stroke: #1c1c1c; stroke-opacity: .7; stroke-width: 2.400; }
.ink { fill: none; stroke: #2ae508; stroke-width: 5.500; stroke-linecap: round; stroke-linejoin: round; }

.node { position: absolute; border: 1px solid #333; border-radius: 3px; background: linear-gradient(#fafafa, #e0e0e0 30%, #c4c4c4); box-shadow: 1px 1px 1px rgba(0,0,0,.3); display: flex; align-items: center; font-size: 9.400px; line-height: 17px; white-space: nowrap; }
.node ul { margin-top: -1px; }
.in { text-align: right; }
.line-a, .line-b { width: 105px; height: 38px; }
.line-a { left: 325px; top: 250px; }
.line-b { left: 1044px; top: 264px; }
.line-a .in, .line-b .in { width: 50px; }
.line-a svg, .line-b svg { margin: 0 6px 0 5px; }
.list { left: 597px; top: 344px; width: 87px; height: 55px; }
.list .in { width: 34px; }
.list svg { margin: 0 4px 0 6px; }
.div-a, .div-b { width: 116px; height: 55px; }
.div-a { left: 859px; top: 370px; }
.div-b { left: 857px; top: 170px; }
.div-a .in, .div-b .in { width: 30px; }
.div-a svg, .div-b svg { margin: 0 5px 0 7px; }
.cut { left: 594px; top: 160px; width: 87px; height: 43px; }
.axis { left: 1233px; top: 170px; width: 92px; height: 44px; background: #9090a6; align-items: flex-end; padding: 0 6px 1px; }
.edge { left: 1353px; top: 170px; width: 40px; height: 53px; background: #9090a6; }

.note { position: absolute; background: #fff85c; border: 1px solid #444; border-radius: 2px; box-shadow: 1px 1px 1px rgba(0,0,0,.3); font-size: 9px; }
.big-note { left: 127px; top: 160px; width: 136px; height: 62px; }
.zero { left: 487px; top: 354px; width: 43px; height: 33px; padding: 8px 0 0 15px; }
.caption { position: absolute; left: 64px; top: 221px; width: 144px; height: 16px; border: 1px solid #333; background: linear-gradient(#fff, #e8e8e8); font-size: 9.200px; letter-spacing: -.05px; line-height: 14px; text-align: center; white-space: nowrap; }
.tip { position: absolute; left: 131px; top: 235px; }

.slider { position: absolute; width: 174px; height: 18px; border: 1px solid #1c3c08; border-radius: 3px; display: flex; background: linear-gradient(#b8f878, #7ed430); font-size: 9.200px; overflow: hidden; }
.slider span { width: 70px; line-height: 16px; text-align: center; white-space: nowrap; background: linear-gradient(#74d428, #4cac0c); border-right: 1px solid #1c3c08; letter-spacing: -.05px; }
.slider text { font-size: 9px; }
.s1 { left: 457px; top: 502px; }
.s2 { left: 435px; top: 578px; }
.s3 { left: 452px; top: 641px; }
.ticks { fill: none; stroke: #4c9418; stroke-opacity: .7; stroke-width: .8; }
.knob { fill: #fff; stroke: #111; stroke-width: 1.600; }

.status { height: 16px; border-top: 2px solid #fff; background: #efefef; display: flex; align-items: flex-start; padding: 4px 0 0 3px; overflow: hidden; line-height: 16px; font-size: 12px; box-shadow: inset 0 1px #ddd; }
.status span { margin-left: 3px; flex: 1; letter-spacing: -.29px; }
.status em { font-style: normal; color: #777; margin-right: 21px; letter-spacing: -.3px; }

.taskbar { height: 30px; background: #101010; display: flex; align-items: center; color: #fff; }
.start { margin-left: 10px; }
.apps { display: flex; margin-left: 510px; height: 30px; }
.app { width: 37px; height: 30px; display: flex; align-items: center; justify-content: center; }
.app.run { background: linear-gradient(#76b9ed, #76b9ed) 50% 100% / 28px 2px no-repeat; }
.app.run.on { background: linear-gradient(#76b9ed, #76b9ed) 0 100% / 37px 2px no-repeat #333; }
.app.run.multi { background-image: linear-gradient(90deg, #76b9ed 19px, #4a7ba4 19px); }
.tray { margin-left: 323px; }
.clock { width: 70px; display: grid; line-height: 14px; text-align: center; font-size: 11.500px; letter-spacing: -.25px; margin-left: -2px; }
.bubble { margin-left: 11px; }
.peek { width: 1px; height: 30px; background: #555; margin-left: 19px; }
```
